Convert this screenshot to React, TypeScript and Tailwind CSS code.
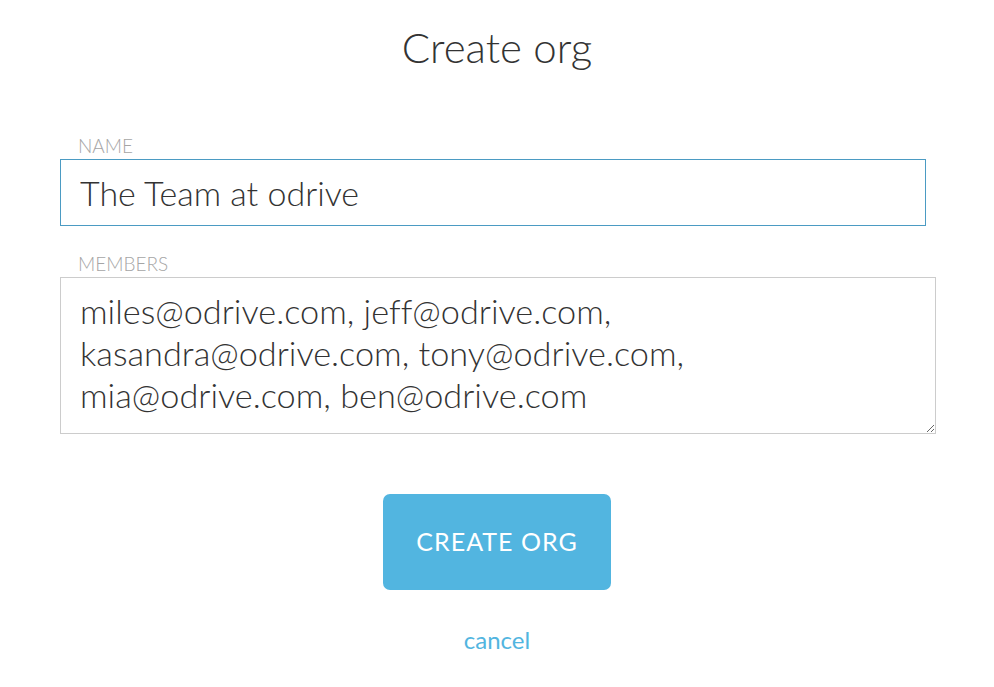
import React from "react";

export default function App() {
  return (
    <div
      className="w-[994px] h-[687px] bg-white flex flex-col items-center overflow-hidden"
      style={{ fontFamily: "Lato, 'Open Sans', sans-serif" }}
    >
      <h1 className="mt-[23px] text-[42px] leading-[48px] font-light text-[#333]">
        Create org
      </h1>

      <div className="self-stretch pl-[60px] mt-[68px] flex flex-col">
        <label className="pl-[18px] mb-[6px] text-[19px] leading-[14px] font-light uppercase text-[#a5a5a5]">
          Name
        </label>
        <input
          readOnly
          value="The Team at odrive"
          className="w-[866px] h-[67px] border border-[#4b9bc3] px-[19px] text-[34px] font-light text-[#333] outline-none bg-white [font-variant-ligatures:none]"
          style={{ fontFamily: "Lato, 'Open Sans', sans-serif" }}
        />
        <label className="mt-[31px] mb-[6px] pl-[18px] text-[19px] leading-[14px] font-light uppercase text-[#a5a5a5]">
          Members
        </label>
        <textarea
          readOnly
          value={
            "miles@odrive.com, jeff@odrive.com,\nkasandra@odrive.com, tony@odrive.com,\nmia@odrive.com, ben@odrive.com"
          }
          className="w-[876px] h-[157px] border border-[#cccccc] px-[19px] pt-[12px] text-[34.3px] leading-[42px] font-light text-[#333] outline-none bg-white resize [font-variant-ligatures:none]"
          style={{ fontFamily: "Lato, 'Open Sans', sans-serif" }}
        />
      </div>

      <button className="mt-[60px] w-[228px] h-[96px] rounded-[7px] bg-[#52b5e0] text-white text-[25px] tracking-[1px] font-normal uppercase">
        Create org
      </button>

      <a className="mt-[32px] text-[24px] text-[#52b5e0] font-normal">cancel</a>
    </div>
  );
}
